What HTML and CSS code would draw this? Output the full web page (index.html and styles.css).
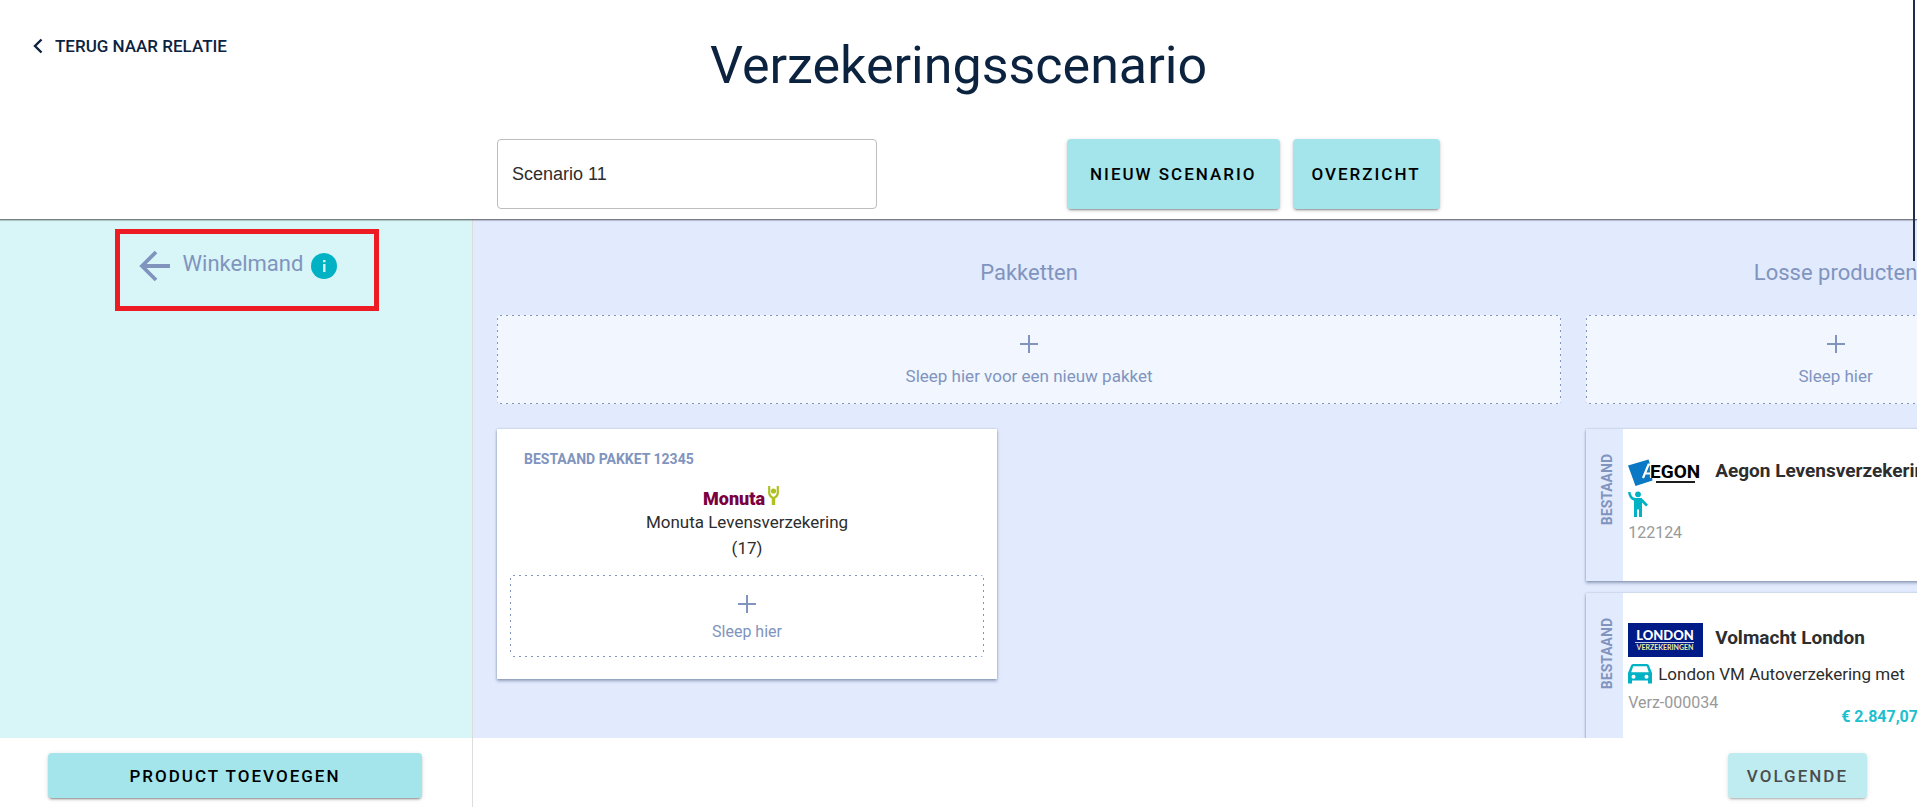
FILE: index.html
```html
<!DOCTYPE html>
<html lang="nl">
<head>
<meta charset="utf-8">
<title>Verzekeringsscenario</title>
<link rel="stylesheet" href="styles.css">
</head>
<body>
<div class="app">
  <header class="header">
    <a class="back" href="#relatie">
      <svg class="back-icon" viewBox="0 0 10 16" aria-hidden="true"><path d="M8.500 1.500 2 8l6.500 6.500" fill="none" stroke="currentColor" stroke-width="2.400"/></svg>
      <span>TERUG NAAR RELATIE</span>
    </a>
    <h1 class="title">Verzekeringsscenario</h1>
    <div class="tools">
      <input class="scenario" type="text" aria-label="Naam scenario" value="Scenario 11">
      <div class="tool-buttons">
        <button class="button wide" type="button">NIEUW SCENARIO</button>
        <button class="button" type="button">OVERZICHT</button>
      </div>
    </div>
  </header>

  <div class="body">
    <aside class="cart">
      <div class="cart-head">
        <svg class="arrow" viewBox="0 0 32 32" aria-hidden="true"><path d="M31 16H3M17 2 3 16l14 14" fill="none" stroke="currentColor" stroke-width="3.800"/></svg>
        <h2 class="heading">Winkelmand</h2>
        <svg class="info" viewBox="0 0 26 26" aria-hidden="true"><circle cx="13" cy="13" r="13" fill="#00b2c3"/><path d="M12 7h2.500v2.300H12zM12 11h2.500v8H12z" fill="#d8f5f7"/></svg>
      </div>
    </aside>

    <main class="board">
      <div class="columns">
        <section class="column">
          <h2 class="heading">Pakketten</h2>
          <div class="drop">
            <svg class="plus" viewBox="0 0 18 18" aria-hidden="true"><path d="M9 0v18M0 9h18" stroke="currentColor" stroke-width="2"/></svg>
            <span>Sleep hier voor een nieuw pakket</span>
          </div>
          <article class="package">
            <h3 class="package-title">BESTAAND PAKKET 12345</h3>
            <svg class="monuta" viewBox="0 0 89 22" role="img" aria-label="Monuta">
              <text x="0" y="20" class="monuta-name">Monuta</text>
              <g fill="none" stroke="#b0c020" stroke-width="2.200"><path d="M66.200 1v7q0 3 3.700 5v7M74.800 1v7q0 3-3.700 5v7"/></g>
              <circle cx="70.500" cy="6" r="2.600" fill="#b0c020"/>
            </svg>
            <p class="package-name">Monuta Levensverzekering<br>(17)</p>
            <div class="drop inner">
              <svg class="plus" viewBox="0 0 18 18" aria-hidden="true"><path d="M9 0v18M0 9h18" stroke="currentColor" stroke-width="2"/></svg>
              <span>Sleep hier</span>
            </div>
          </article>
        </section>

        <section class="column">
          <h2 class="heading">Losse producten</h2>
          <div class="drop">
            <svg class="plus" viewBox="0 0 18 18" aria-hidden="true"><path d="M9 0v18M0 9h18" stroke="currentColor" stroke-width="2"/></svg>
            <span>Sleep hier</span>
          </div>
          <div class="products">
            <article class="product">
              <div class="strip"><span>BESTAAND</span></div>
              <div class="details">
                <div class="product-head">
                  <svg class="logo aegon" viewBox="0 0 75 28" role="img" aria-label="Aegon">
                    <path d="M0 6.500 20.500 0.500 22 5 24.500 21.500 7.500 27z" fill="#0a78c4"/>
                    <path d="M15 19 20.500 5.500H23V19M17 14.500h6" fill="none" stroke="#fff" stroke-width="2.200"/>
                    <text x="22" y="19" class="aegon-name">EGON</text>
                    <path d="M28 23h39" stroke="#1d1d1b" stroke-width="2"/>
                  </svg>
                  <h3 class="product-title">Aegon Levensverzekering</h3>
                </div>
                <div class="kind">
                  <svg class="person" viewBox="0 0 20 26" aria-hidden="true"><circle cx="10" cy="3.300" r="2.900" fill="#00b2c3"/><path d="M0 1h2.500q.5 5.500 5 6h6l6.500 6.700-2 1.800-4-4V26H11v-7.500H9V26H6V9.800Q.800 7.800 0 1z" fill="#00b2c3"/></svg>
                </div>
                <div class="facts"><p class="number">122124</p></div>
              </div>
            </article>
            <article class="product">
              <div class="strip"><span>BESTAAND</span></div>
              <div class="details">
                <div class="product-head">
                  <svg class="logo london" viewBox="0 0 75 34" role="img" aria-label="London Verzekeringen">
                    <path d="M0 0h75v34H0z" fill="#001b87"/>
                    <text x="37" y="17" class="london-name">LONDON</text>
                    <path d="M7 19.500h59" stroke="#c9d0ee" stroke-width="1"/>
                    <text x="37" y="27" class="london-sub">VERZEKERINGEN</text>
                  </svg>
                  <h3 class="product-title">Volmacht London</h3>
                </div>
                <div class="kind">
                  <svg class="car" viewBox="0 0 24 20" aria-hidden="true"><path fill-rule="evenodd" d="M5 0h14q1.500 0 2 1.500L24 9v10.500h-4V16.500H4v3H0V9l3-7.500Q3.500 0 5 0zM5.200 2.200 3.200 8.300h17.600l-2-6.100zM5.500 10.700a2 2 0 1 0 .01 0zM18.500 10.700a2 2 0 1 0 .01 0z" fill="#00b2c3"/></svg>
                  <span>London VM Autoverzekering met</span>
                </div>
                <div class="facts">
                  <p class="number">Verz-000034</p>
                  <p class="price">€ 2.847,07</p>
                </div>
              </div>
            </article>
          </div>
        </section>
      </div>
    </main>
  </div>

  <footer class="footer">
    <div class="footer-side"><button class="button low" type="button">PRODUCT TOEVOEGEN</button></div>
    <div class="footer-main"><button class="button low" type="button" disabled>VOLGENDE</button></div>
  </footer>

  <div class="highlight"></div>
  <div class="scroll-thumb"></div>
</div>
</body>
</html>
```
FILE: styles.css
```css
* { box-sizing: border-box; }

body {
  margin: 0;
  font-family: Roboto, "Liberation Sans", sans-serif;
  font-size: 17px;
  line-height: 26px;
  color: #2d2d2d;
  background: #fff;
}

h1, h2, h3, p { margin: 0; }
svg { display: block; flex: none; }

.app {
  --side: 473px;
  position: relative;
  display: flex;
  flex-direction: column;
  height: 100vh;
  overflow: hidden;
}

/* Header */
.header {
  position: relative;
  z-index: 1;
  flex: none;
  padding: 31px 0 10px;
  box-shadow: 0 1px 1px rgba(0, 0, 0, .4), 0 2px 1px rgba(0, 0, 0, .12);
  background: #fff;
}
.back {
  position: absolute;
  top: 33px;
  left: 33px;
  display: flex;
  align-items: center;
  gap: 12px;
  color: #0c2340;
  font-weight: 500;
  text-decoration: none;
}
.back-icon { width: 10px; height: 16px; }
.title {
  font-size: 52px;
  font-weight: 400;
  line-height: 70px;
  text-align: center;
  color: #0c2340;
}
.tools {
  display: flex;
  gap: 190px;
  margin: 38px 24px 0 calc(var(--side) + 24px);
}
.scenario {
  width: 380px;
  height: 70px;
  padding: 0 14px;
  border: 1px solid #bdbdbd;
  border-radius: 4px;
  background: #fff;
  color: #2d2d2d;
  font: 18px "Liberation Sans", Arial, sans-serif;
}
.tool-buttons { display: flex; gap: 13px; }

.button {
  padding: 0 19px;
  border: 0;
  border-radius: 4px;
  background: #a3e5ea;
  box-shadow: 0 3px 1px -2px rgba(0, 0, 0, .2), 0 2px 2px rgba(0, 0, 0, .14), 0 1px 5px rgba(0, 0, 0, .12);
  color: #000;
  font: 500 17px/26px Roboto, "Liberation Sans", sans-serif;
  letter-spacing: 2px;
}
.button.wide { padding: 0 23px; }
.button.low { height: 45px; }
.button:disabled { opacity: .7; }

/* Body */
.body { flex: 1; display: flex; min-height: 0; }
.heading {
  font-size: 22px;
  font-weight: 400;
  line-height: 32px;
  text-align: center;
  color: #8094be;
}
.cart {
  flex: none;
  width: var(--side);
  padding: 27px 0 0 4px;
  border-right: 1px solid #dcdcdc;
  background: #d8f5f7;
}
.cart-head {
  display: flex;
  align-items: center;
  justify-content: center;
  color: #8094be;
}
.arrow { width: 32px; height: 32px; margin: 4px 12px 0 0; }
.info { width: 26px; height: 26px; margin: 4px 0 0 8px; }

.board { flex: 1; min-width: 0; overflow: hidden; background: #e2eafe; }
.columns {
  display: grid;
  grid-template-columns: 32fr 15fr;
  gap: 25px;
  min-width: 1636px;
  padding: 38px 24px 24px;
}
.drop {
  --fill: #f2f6ff;
  --dash: #8094be 0 2px, transparent 2px 6px;
  display: flex;
  flex-direction: column;
  align-items: center;
  gap: 8px;
  margin: 26px 0 25px;
  padding: 20px 0 13px;
  border-radius: 4px;
  background:
    repeating-linear-gradient(90deg, var(--dash)) 3px 0 / 100% 1px no-repeat,
    repeating-linear-gradient(90deg, var(--dash)) 3px 100% / 100% 1px no-repeat,
    repeating-linear-gradient(180deg, var(--dash)) 0 3px / 1px 100% no-repeat,
    repeating-linear-gradient(180deg, var(--dash)) 100% 3px / 1px 100% no-repeat,
    var(--fill);
  color: #8094be;
}
.plus { width: 18px; height: 18px; }
.drop > span { line-height: 30px; }

.package, .product {
  background: #fff;
  box-shadow: 0 2px 3px rgba(30, 50, 90, .4), 0 0 2px rgba(30, 50, 90, .2);
}
.package {
  display: flex;
  flex-direction: column;
  width: 500px;
  padding: 18px 13px 22px;
}
.package-title {
  padding-left: 14px;
  font-size: 14px;
  font-weight: 700;
  line-height: 24px;
  color: #8094be;
}
.monuta { width: 89px; height: 22px; margin: 14px auto 2px; }
.monuta-name { font: 900 18px Roboto, sans-serif; fill: #7a0040; }
.package-name { text-align: center; }
.drop.inner {
  --fill: #fff;
  gap: 5px;
  margin: 14px 0 0;
  padding: 20px 0 11px;
  font-size: 16px;
}
.drop.inner > span { line-height: 28px; }

.products { display: grid; gap: 12px; }
.product { display: flex; min-height: 152px; }
.strip {
  flex: none;
  display: flex;
  justify-content: center;
  width: 37px;
  padding: 25px 0 0 4px;
  background: #e2eafe;
  color: #8094be;
  font-size: 14px;
  font-weight: 700;
  line-height: 20px;
}
.strip span { writing-mode: vertical-rl; transform: rotate(180deg); align-self: flex-start; }
.details { flex: 1; padding: 30px 16px 8px 5px; }
.product-head { display: flex; align-items: center; gap: 12px; }
.product-title { padding-bottom: 4px; font-size: 19px; font-weight: 700; line-height: 22px; }
.logo { width: 75px; }
.aegon { height: 28px; }
.london { height: 34px; }
.aegon-name { font: 700 19px Roboto, sans-serif; fill: #000; }
.london-name { font: 900 13px Lato, sans-serif; fill: #fff; text-anchor: middle; }
.london-sub { font: 700 7px Lato, sans-serif; fill: #f3ec9a; text-anchor: middle; }
.kind { display: flex; align-items: center; gap: 6px; min-height: 33px; }
.person { width: 20px; height: 26px; }
.car { width: 24px; height: 20px; }
.facts { display: flex; align-items: flex-start; font-size: 16px; line-height: 26px; }
.number { width: 213px; color: #999; }
.price { padding-top: 14px; color: #1cc0cf; font-weight: 700; }

/* Footer */
.footer { flex: none; display: flex; height: 69px; background: #fff; }
.footer-side {
  flex: none;
  display: flex;
  align-items: flex-start;
  width: var(--side);
  padding: 15px 50px 0 48px;
  border-right: 1px solid #dcdcdc;
}
.footer-side .button { flex: 1; }
.footer-main {
  flex: 1;
  display: flex;
  align-items: flex-start;
  justify-content: flex-end;
  padding: 15px 50px 0;
}

/* Overlays */
.highlight {
  position: absolute;
  z-index: 2;
  top: 229px;
  left: 115px;
  width: 264px;
  height: 82px;
  border: 5px solid #ed1c24;
}
.scroll-thumb {
  position: absolute;
  z-index: 2;
  top: 0;
  right: 2px;
  width: 2px;
  height: 261px;
  background: #1f2c4d;
}
```
